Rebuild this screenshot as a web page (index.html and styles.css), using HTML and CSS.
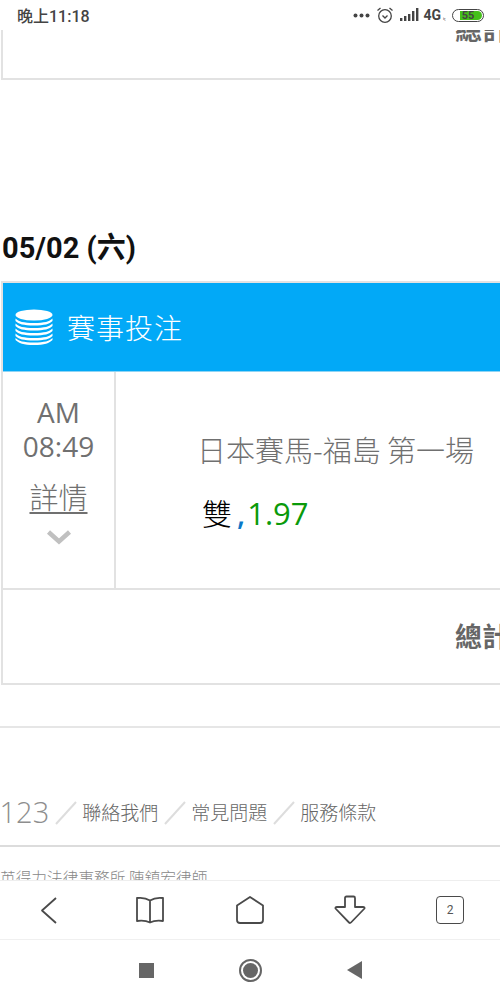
FILE: index.html
```html
<!DOCTYPE html>
<html lang="zh-Hant">

<head>
    <meta charset="UTF-8">
    <meta name="viewport" content="width=device-width, initial-scale=1.0">
    <title>賽事投注</title>
    <link rel="stylesheet" href="styles.css">
</head>

<body>
    <!-- Phone status bar -->
    <div class="status-bar">
        <span class="status-time">晚上11:18</span>
        <div class="status-icons">
            <svg width="17" height="5" viewBox="0 0 17 5"><circle cx="2.5" cy="2.5" r="2" /><circle cx="8.5" cy="2.5" r="2" /><circle cx="14.5" cy="2.5" r="2" /></svg>
            <svg class="alarm" width="18" height="18" viewBox="0 0 18 18"><circle cx="9" cy="10" r="6.3" /><path d="M6.5 9.5 9 12l2.5-2.5M1.5 4.5 4.5 2M16.5 4.5 13.5 2" /></svg>
            <svg width="19" height="14" viewBox="0 0 19 14"><rect x="0" y="10" width="2.4" height="3" /><rect x="4" y="8" width="2.4" height="5" /><rect x="8" y="6" width="2.4" height="7" /><rect x="12" y="3" width="2.4" height="10" /><rect x="16" y="0" width="2.4" height="13" /></svg>
            <span class="status-net">4G</span>
            <span class="status-tiny">ᵢₜ</span>
            <div class="battery"><div class="battery-fill"></div><span class="battery-num">55</span></div>
        </div>
    </div>

    <div class="page">
        <!-- Previous day's card, scrolled off the top -->
        <div class="card card-prev">
            <div class="total-row total-prev">總計</div>
        </div>

        <h2 class="day-title">05/02 (六)</h2>

        <div class="card">
            <div class="card-header">
                <svg class="coins" width="38" height="36" viewBox="0 0 38 36">
                    <ellipse cx="19" cy="6" rx="18.5" ry="5.5" />
                    <path d="M.5 9.5c3 3 8 4.5 18.5 4.5s15.500-1.500 18.500-4.500v2.500c-3 3-8 4.500-18.500 4.500S3.500 15 .5 12zM.5 14.500c3 3 8 4.500 18.500 4.500s15.500-1.500 18.500-4.500V17c-3 3-8 4.500-18.500 4.500S3.500 20 .5 17zM.5 19.500c3 3 8 4.500 18.500 4.500s15.500-1.500 18.500-4.500V22c-3 3-8 4.500-18.500 4.500S3.500 25 .5 22zM.5 24.500c3 3 8 4.500 18.500 4.500s15.500-1.500 18.500-4.500V27c-3 3-8 4.500-18.500 4.500S3.500 30 .5 27zM.5 29c3 3 8 4.500 18.500 4.500S34.500 32 37.500 29v2c-3 3-8 5-18.500 5S3.500 34 .5 31z" />
                </svg>
                <span class="card-title">賽事投注</span>
            </div>

            <div class="bet-row">
                <div class="bet-time">
                    <div class="bet-clock">AM<br>08:49</div>
                    <a class="bet-detail">詳情</a>
                    <svg class="chevron" width="26" height="16" viewBox="0 0 26 16"><path d="M2.5 3 13 12.5 23.5 3" /></svg>
                </div>
                <div class="bet-info">
                    <div class="bet-name">日本賽馬-福島 第一場</div>
                    <div class="bet-pick"><span class="pick-name">雙</span><span class="pick-comma">,</span><span class="pick-odds">1.97</span></div>
                </div>
            </div>

            <div class="total-row">總計</div>
        </div>

        <!-- Site footer -->
        <div class="footer">
            <div class="footer-links">
                <span class="footer-phone">0123</span>
                <svg class="slash" width="22" height="24" viewBox="0 0 22 24"><path d="M1 23 21 1" /></svg>
                <span>聯絡我們</span>
                <svg class="slash" width="22" height="24" viewBox="0 0 22 24"><path d="M1 23 21 1" /></svg>
                <span>常見問題</span>
                <svg class="slash" width="22" height="24" viewBox="0 0 22 24"><path d="M1 23 21 1" /></svg>
                <span>服務條款</span>
            </div>
            <div class="footer-legal">英得力法律事務所 陳鎮宏律師</div>
        </div>
    </div>

    <!-- Browser toolbar -->
    <div class="toolbar">
        <svg width="30" height="30" viewBox="0 0 30 30"><path d="M21 3 7 15.5 21 28" /></svg>
        <svg width="30" height="30" viewBox="0 0 30 30"><path d="M15 5.5C12 3.5 6 2.5 2 3v23c4-.5 10 0 13 1.5 3-1.5 9-2 13-1.500V3c-4-.5-10 .5-13 2.500zM15 5.500v22" /></svg>
        <svg width="30" height="30" viewBox="0 0 30 30"><path d="M15 2 28 10.5V25q0 3-3 3H5q-3 0-3-3V10.5z" /></svg>
        <svg width="32" height="30" viewBox="0 0 32 30"><path d="M11 3q0-1.5 1.500-1.500h7Q21 1.500 21 3v9h8q2 0 1.500 1.500L17 27.500q-1 1-2 0L1.500 13.500Q1 12 3 12h8z" /></svg>
        <div class="tab-count">2</div>
    </div>

    <!-- Android nav keys -->
    <div class="sys-nav">
        <div class="key-square"></div>
        <div class="key-circle"><div class="key-dot"></div></div>
        <svg width="15" height="18" viewBox="0 0 15 18"><path d="M15 0v18L0 9z" /></svg>
    </div>
</body>

</html>
```
FILE: styles.css
```css
/* General body styling */
html,
body {
    margin: 0;
    padding: 0;
    background-color: white;
}

body {
    width: 500px;
    height: 1000px;
    display: flex;
    flex-direction: column;
    overflow: hidden;
    font-family: "Noto Sans CJK TC", sans-serif;
    color: #707070;
}

/* Status bar */
.status-bar {
    height: 30px;
    flex: none;
    display: flex;
    justify-content: space-between;
    align-items: center;
    padding: 0 16px 0 17px;
    background-color: white;
    color: #444;
}

.status-time {
    font-family: Roboto, "Noto Sans CJK TC", sans-serif;
    font-size: 16px;
    font-weight: 500;
}

.status-icons {
    display: flex;
    align-items: center;
}

.status-icons svg {
    fill: #444;
    margin-right: 6px;
}

.status-icons .alarm {
    fill: none;
    stroke: #444;
    stroke-width: 1.3;
    margin-right: 6px;
}

.status-net {
    font-family: Roboto, sans-serif;
    font-size: 14px;
    font-weight: 700;
    margin-left: -2px;
}

.status-tiny {
    font-family: Roboto, sans-serif;
    font-size: 7px;
    width: 9px;
    margin-top: 4px;
    margin-left: 2px;
}

.battery {
    position: relative;
    width: 30px;
    height: 11px;
    border: 1.5px solid #444;
    border-radius: 7px;
    display: flex;
    justify-content: center;
    align-items: center;
}

.battery-fill {
    position: absolute;
    left: 7px;
    top: 1px;
    bottom: 1px;
    right: 1px;
    background-color: #45c01a;
    border-radius: 0 5px 5px 0;
}

.battery-num {
    position: relative;
    font-family: Roboto, sans-serif;
    font-size: 11px;
    font-weight: 700;
    line-height: 11px;
}

/* Scrolled page */
.page {
    flex: 1;
    min-height: 0;
    overflow: hidden;
    padding-left: 1px;
}

.card {
    width: 560px;
    border: 2px solid #e2e2e2;
    box-sizing: border-box;
}

.card-prev {
    height: 50px;
    border-top: none;
    overflow: hidden;
}

.day-title {
    margin: 150px 0 0 1px;
    height: 51px;
    line-height: 36px;
    font-family: Roboto, "Noto Sans CJK TC", sans-serif;
    font-size: 29px;
    font-weight: 700;
    color: #111;
}

.card-header {
    height: 88px;
    display: flex;
    align-items: center;
    gap: 14px;
    padding-left: 12px;
    background-color: #02a9f7;
    border-bottom: 1px solid #8fd4f4;
    color: white;
}

.coins {
    fill: white;
}

.card-title {
    font-size: 28px;
    font-weight: 300;
    letter-spacing: 1px;
}

.bet-row {
    height: 216px;
    display: flex;
    border-bottom: 2px solid #e2e2e2;
}

.bet-time {
    width: 111px;
    flex: none;
    border-right: 2px solid #e2e2e2;
    display: flex;
    flex-direction: column;
    align-items: center;
    padding-top: 23px;
}

.bet-clock {
    font-family: "Open Sans", sans-serif;
    font-size: 28px;
    line-height: 34px;
    text-align: center;
}

.bet-detail {
    margin-top: 16px;
    font-size: 29px;
    font-weight: 300;
    line-height: 34px;
    text-decoration: underline;
    text-decoration-thickness: 2px;
    text-underline-offset: 3px;
}

.chevron {
    margin-top: 16px;
    fill: none;
    stroke: #c0c0c0;
    stroke-width: 4.5;
}

.bet-info {
    padding: 57px 0 0 81px;
}

.bet-name {
    font-size: 29px;
    font-weight: 300;
    line-height: 40px;
    white-space: nowrap;
}

.bet-pick {
    margin-top: 23px;
    margin-left: 5px;
    display: flex;
    align-items: baseline;
    font-size: 30px;
    line-height: 40px;
    white-space: nowrap;
}

.pick-name {
    color: black;
    font-weight: 300;
}

.pick-comma {
    color: #0a78c8;
    font-family: "Open Sans", sans-serif;
    font-weight: 600;
    margin-left: 5px;
}

.pick-odds {
    color: #0a9a0a;
    font-family: "Open Sans", sans-serif;
    font-size: 31px;
    margin-left: 2px;
}

.total-row {
    height: 93px;
    padding: 26px 0 0 452px;
    box-sizing: border-box;
    font-size: 27px;
    font-weight: 700;
    line-height: 40px;
    color: #666;
    white-space: nowrap;
}

.total-prev {
    height: 48px;
    padding-top: 0;
    margin-top: -21px;
}

/* Footer */
.footer {
    margin-top: 41px;
    margin-left: -1px;
    border-top: 2px solid #e6e6e6;
}

.footer-links {
    height: 119px;
    box-sizing: border-box;
    display: flex;
    align-items: flex-end;
    gap: 5.5px;
    padding-bottom: 20px;
    margin-left: -17px;
    font-size: 19px;
    font-weight: 300;
    color: #666;
    border-bottom: 2px solid #dcdcdc;
    white-space: nowrap;
}

.footer-phone {
    font-family: "Open Sans", sans-serif;
    font-size: 29px;
    line-height: 30px;
    margin-bottom: -2px;
    color: #8e8e8e;
}

.slash {
    fill: none;
    stroke: #ddd;
    stroke-width: 2;
}

.footer-legal {
    margin-top: 21px;
    font-size: 15.7px;
    font-weight: 300;
    line-height: 20px;
    color: #888;
    white-space: nowrap;
}

/* Browser toolbar */
.toolbar {
    height: 60px;
    flex: none;
    box-sizing: border-box;
    display: flex;
    justify-content: space-between;
    align-items: center;
    padding: 0 36px 0 35px;
    background-color: white;
    border-top: 1px solid #eee;
    border-bottom: 1px solid #f0f0f0;
}

.toolbar svg {
    fill: none;
    stroke: #4a4a4a;
    stroke-width: 1.8;
    stroke-linejoin: round;
}

.tab-count {
    width: 26px;
    height: 26px;
    border: 1.5px solid #4a4a4a;
    border-radius: 4px;
    display: flex;
    justify-content: center;
    align-items: center;
    font-family: Roboto, sans-serif;
    font-size: 12px;
    color: #555;
}

/* Android nav keys */
.sys-nav {
    height: 60px;
    flex: none;
    display: flex;
    justify-content: center;
    align-items: center;
    gap: 85px;
    background-color: white;
}

.sys-nav svg {
    fill: #666;
}

.key-square {
    width: 15px;
    height: 15px;
    background-color: #666;
}

.key-circle {
    width: 19px;
    height: 19px;
    border: 2px solid #666;
    border-radius: 50%;
    display: flex;
    justify-content: center;
    align-items: center;
}

.key-dot {
    width: 15px;
    height: 15px;
    border-radius: 50%;
    background-color: #666;
}
```
